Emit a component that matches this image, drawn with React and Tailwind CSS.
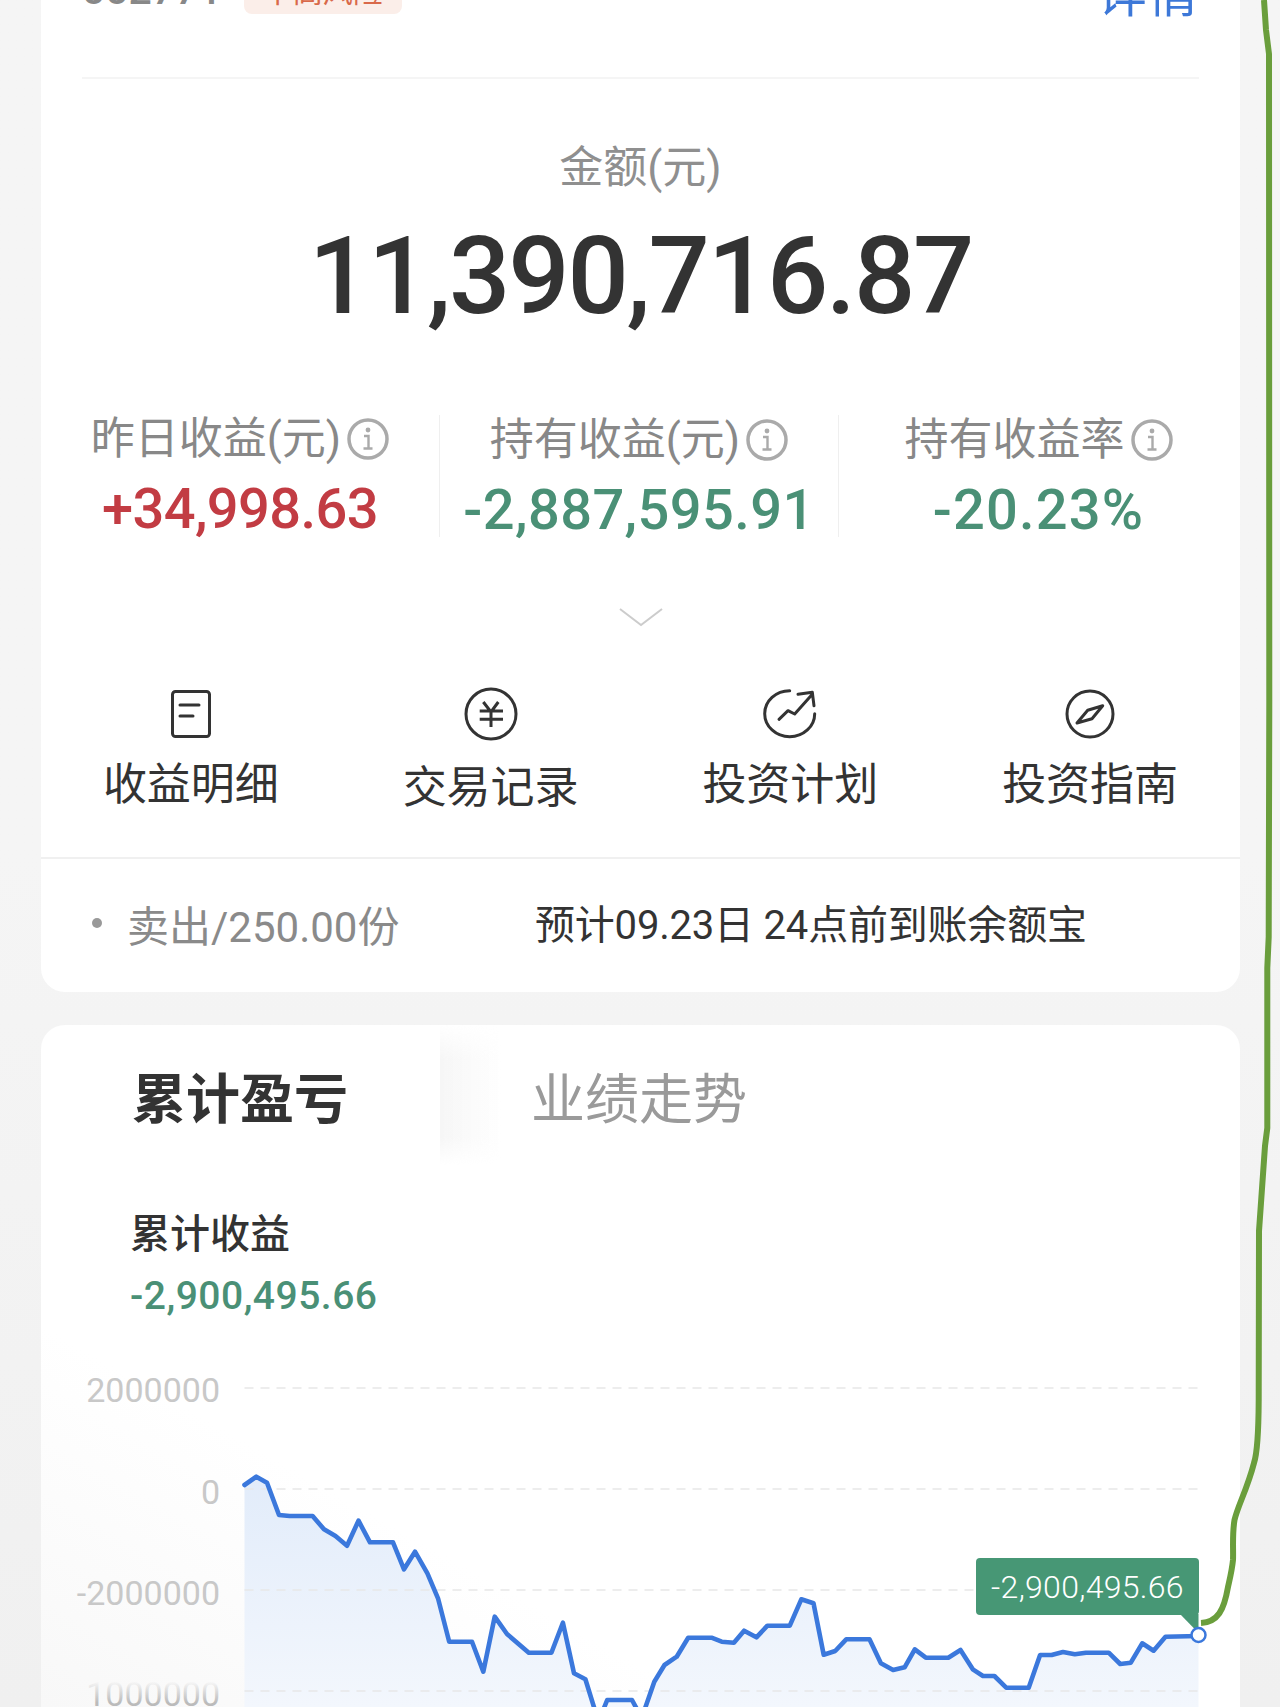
const linePoints = '244.5,1485 256.3,1476.7 267,1482.7 279,1515 289.6,1516 312.6,1516 324,1529.3 335.5,1536 347,1545.7 358.5,1520.7 370,1542.3 393,1542.3 404,1569.3 415,1551.7 427.4,1573.3 438,1598.3 449.2,1641.7 472,1641.7 483.3,1671.7 494.7,1616.7 507,1634 528.8,1652.7 551.4,1652.7 562.9,1622.7 574,1673.3 585.4,1679.3 595.8,1713 602,1713 607.2,1700 632,1700 641.7,1718 654.3,1681.7 664.5,1665 676.7,1656.7 688.2,1637.7 711.5,1637.7 721.7,1641.7 733.9,1642.7 744.1,1630.7 756.4,1637.3 767.4,1625.7 789.8,1625.7 801.3,1599.3 813.5,1603.3 823.7,1654.7 835.2,1651 846.2,1639.3 869.5,1639.3 880.9,1663.3 893.1,1670 904.6,1667.3 914.8,1649.3 925.8,1657.7 948.3,1657.7 960.5,1650 972.8,1669.3 983,1676 994.4,1676 1006.2,1687.7 1028.7,1687.7 1040.1,1655 1051.6,1655 1063,1652 1074.8,1654.3 1085.9,1652.7 1108.7,1652.7 1120.2,1664 1130.8,1662.7 1142.2,1643.3 1153.6,1650.7 1165.5,1636.7 1198.5,1636';

function InfoIcon() {
  return (
    <svg width="42" height="42" viewBox="0 0 42 42" fill="none" stroke="#aaa" strokeWidth="3.5" className="shrink-0">
      <circle cx="21" cy="21" r="19" />
      <circle cx="21" cy="12" r="2.4" fill="#aaa" stroke="none" />
      <path d="M17 18H21.5V30M16.5 30.5H25.5" strokeWidth="2.4" />
    </svg>
  );
}

function Stat({ label, value, color, tracking, offset, last }) {
  return (
    <div className={`h-[122px] flex flex-col items-center ${last ? '' : 'border-r border-[#efefef]'}`}>
      <div className={`flex items-center gap-[6px] text-[44px] leading-[44px] text-[#888] ${offset}`}>
        {label}
        <InfoIcon />
      </div>
      <div className={`text-[56px] leading-[48px] font-medium ${color} ${tracking}`}>{value}</div>
    </div>
  );
}

function Action({ icon, label, offset }) {
  return (
    <div className="flex flex-col items-center">
      <div className="h-[54px] flex items-center justify-center">{icon}</div>
      <div className={`text-[44px] leading-[44px] text-[#333] ${offset}`}>{label}</div>
    </div>
  );
}

export default function App() {
  return (
    <div className="relative w-[1280px] h-[1707px] overflow-hidden bg-gradient-to-b from-[#f5f5f5] via-[#f5f5f5] to-[#f0f0f0] font-['Roboto','Noto_Sans_CJK_SC',sans-serif]">
      {/* Holding card */}
      <div className="-mt-[40px] ml-[41px] w-[1199px] bg-white rounded-b-[24px]">
        <div className="mx-[41px] h-[119px] border-b-2 border-[#f5f5f5] flex items-start">
          <span className="mt-[6px] text-[41px] leading-[48px] font-medium text-[#888]">002771</span>
          <span className="ml-[22px] mt-[10px] w-[158px] h-[44px] rounded-[8px] bg-[#fbeee9] text-[#d9694a] text-[30px] leading-[44px] text-center">中高风险</span>
          <span className="ml-auto mt-[10px] text-[50px] leading-[50px] tracking-[1px] text-[#3d78d8]">详情</span>
        </div>

        <div className="pt-[67px] text-center text-[44px] leading-[44px] text-[#8f8f8f]">金额(元)</div>
        <div className="mt-[32px] text-center text-[108px] leading-[108px] font-medium tracking-[-2.2px] text-[#333]">11,390,716.87</div>

        <div className="mt-[85px] w-[1197px] grid grid-cols-3">
          <Stat label="昨日收益(元)" value="+34,998.63" color="text-[#c23c43] mt-[24px]" tracking="tracking-[-0.6px]" offset="mt-[2px]" />
          <Stat label="持有收益(元)" value="-2,887,595.91" color="text-[#4a9076] mt-[24px]" tracking="tracking-[0.4px]" offset="mt-[3px]" />
          <Stat label="持有收益率" value="-20.23%" color="text-[#4a9076] mt-[24px]" tracking="tracking-[1.2px]" offset="mt-[3px]" last />
        </div>

        <div className="mt-[70px] flex justify-center">
          <svg width="44" height="20" viewBox="0 0 44 20" fill="none" stroke="#ccc" strokeWidth="2">
            <path d="M1 2L22 18L43 2" />
          </svg>
        </div>

        <div className="mt-[60px] grid grid-cols-4 pb-[47px]">
          <Action
            offset="mt-[22px]"
            label="收益明细"
            icon={
              <svg width="40" height="48" viewBox="0 0 40 48" fill="none" stroke="#333" strokeWidth="3" strokeLinecap="round">
                <rect x="1.5" y="1.5" width="37" height="45" rx="3" />
                <path d="M9 15H28M9 26H22" />
              </svg>
            }
          />
          <Action
            offset="mt-[25px]"
            label="交易记录"
            icon={
              <svg width="54" height="54" viewBox="0 0 54 54" fill="none" stroke="#333" strokeWidth="3">
                <circle cx="27" cy="27" r="25" />
                <path d="M19.3 15L27 25L34.3 15M15.7 24H39M15.7 32.3H39M27 25V40" />
              </svg>
            }
          />
          <Action
            offset="mt-[22px]"
            label="投资计划"
            icon={
              <svg width="54" height="50" viewBox="0 0 54 50" fill="none" stroke="#333" strokeWidth="3" strokeLinecap="round" strokeLinejoin="round">
                <path d="M26.7 1.7A25 23 0 1 0 51.7 24.7" />
                <path d="M16 30.3L25 21.7L31.7 25L49.3 5.3M35 5.3L49.3 3.3L51 16.7" />
              </svg>
            }
          />
          <Action
            offset="mt-[22px]"
            label="投资指南"
            icon={
              <svg width="50" height="50" viewBox="0 0 50 50" fill="none" stroke="#333" strokeWidth="3" strokeLinejoin="round">
                <circle cx="25" cy="25" r="23" />
                <path d="M37.7 16.7L22.7 21.3L12 34L27 29.7Z" />
              </svg>
            }
          />
        </div>

        <div className="h-[135px] border-t-2 border-[#f0f0f0] flex items-start relative">
          <span className="ml-[51px] mt-[59px] w-[10px] h-[10px] rounded-full bg-[#999]" />
          <span className="ml-[25px] mt-[45px] text-[42px] leading-[48px] text-[#8a8a8a]">卖出/250.00份</span>
          <span className="absolute left-[494px] top-[43px] text-[40px] leading-[48px] tracking-[-0.2px] text-[#333]">预计09.23日 24点前到账余额宝</span>
        </div>
      </div>

      {/* Profit chart card */}
      <div className="mt-[33px] ml-[41px] w-[1199px] bg-gradient-to-tr from-[#f8f8f8] via-white via-[28%] to-white rounded-t-[24px]">
        <div className="flex h-[140px]">
          <div className="w-[399px] rounded-tl-[24px] pl-[91px] pt-[49px] text-[54px] leading-[54px] font-bold text-[#333]">累计盈亏</div>
          <div className="relative flex-1 rounded-tr-[24px] pl-[91px] pt-[49px] text-[54px] leading-[54px] text-[#9a9a9a]">
            <div className="absolute left-0 top-0 bottom-0 w-[62px] bg-gradient-to-r from-[#f6f6f6] to-transparent [mask-image:linear-gradient(to_bottom,transparent,black_25%,black_80%,transparent)]" />
            <span className="relative">业绩走势</span>
          </div>
        </div>

        <div className="mt-[48px] pl-[89px] text-[40px] leading-[44px] font-medium text-[#333]">累计收益</div>
        <div className="mt-[17px] pl-[89px] text-[39px] leading-[44px] font-medium tracking-[0.5px] text-[#4a9076]">-2,900,495.66</div>

        <div className="relative mt-[42px] h-[347px]">
          <svg width="1199" height="347" viewBox="41 1360 1199 347" fill="none" className="block">
            <defs>
              <linearGradient id="area" x1="0" y1="1480" x2="0" y2="1707" gradientUnits="userSpaceOnUse">
                <stop offset="0" stopColor="#e2ecfa" />
                <stop offset="1" stopColor="#f3f7fd" />
              </linearGradient>
              <linearGradient id="cut" x1="0" y1="1678" x2="0" y2="1707" gradientUnits="userSpaceOnUse">
                <stop offset="0.1" stopColor="#bbb" stopOpacity="0" />
                <stop offset="0.85" stopColor="#bbb" />
                <stop offset="1" stopColor="#bbb" />
              </linearGradient>
            </defs>
            <polygon points={`244.5,1740 ${linePoints} 1198.5,1740`} fill="url(#area)" />
            {[1388, 1489, 1590, 1691].map(y => (
              <line key={y} x1="244.5" x2="1199" y1={y} y2={y} stroke="#e8e8e8" strokeWidth="1.5" strokeDasharray="9 7" />
            ))}
            <g fill="#c8c8c8" fontSize="34" textAnchor="end">
              <text x="220" y="1402">2000000</text>
              <text x="220" y="1504">0</text>
              <text x="220" y="1605">-2000000</text>
              <text x="220" y="1706" fill="url(#cut)">1000000</text>
            </g>
            <polyline points={linePoints} stroke="#3b78dc" strokeWidth="4.6" strokeLinejoin="round" strokeLinecap="round" />
            <polygon points="1180,1614 1198.5,1614 1198.5,1633" fill="#479775" />
            <circle cx="1198.5" cy="1635" r="7" fill="white" stroke="#3b78dc" strokeWidth="2.5" />
          </svg>
          <div className="absolute left-[935px] top-[198px] w-[223px] h-[57px] rounded-[4px] bg-[#479775] text-white text-center text-[32px] leading-[59px] tracking-[0.3px] font-light">-2,900,495.66</div>
        </div>
      </div>

      {/* Hand-drawn annotation line */}
      <svg width="85" height="1707" viewBox="1195 0 85 1707" fill="none" className="absolute left-[1195px] top-0">
        <path
          d="M1264 0L1266 30L1269 54L1269.3 700L1268.7 937L1267.3 968L1267.3 1128L1265 1146L1259 1231L1258.7 1400C1258.5 1440 1256 1457 1254 1463C1247 1490 1238 1505 1234.5 1520C1232 1535 1233.5 1550 1233 1560C1232 1570 1230 1578 1228 1587C1224 1610 1218 1622 1201 1623"
          stroke="#6a9e3c"
          strokeWidth="6"
          strokeLinejoin="round"
        />
      </svg>
    </div>
  );
}
